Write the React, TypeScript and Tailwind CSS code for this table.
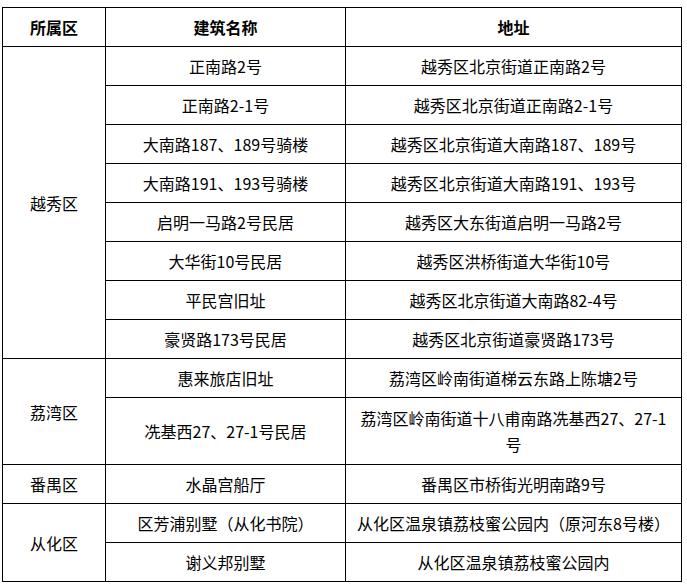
import React from 'react'

type Row = {
  district?: string
  span?: number
  name: React.ReactNode
  address: React.ReactNode
  tall?: boolean
}

const ROWS: Row[] = [
  { district: '越秀区', span: 8, name: '正南路2号', address: '越秀区北京街道正南路2号' },
  { name: '正南路2-1号', address: '越秀区北京街道正南路2-1号' },
  { name: '大南路187、189号骑楼', address: '越秀区北京街道大南路187、189号' },
  { name: '大南路191、193号骑楼', address: '越秀区北京街道大南路191、193号' },
  { name: '启明一马路2号民居', address: '越秀区大东街道启明一马路2号' },
  { name: '大华街10号民居', address: '越秀区洪桥街道大华街10号' },
  { name: '平民宫旧址', address: '越秀区北京街道大南路82-4号' },
  { name: '豪贤路173号民居', address: '越秀区北京街道豪贤路173号' },
  { district: '荔湾区', span: 2, name: '惠来旅店旧址', address: '荔湾区岭南街道梯云东路上陈塘2号' },
  {
    name: '冼基西27、27-1号民居',
    address: (
      <>
        荔湾区岭南街道十八甫南路冼基西27、27-1
        <br />号
      </>
    ),
    tall: true,
  },
  { district: '番禺区', span: 1, name: '水晶宫船厅', address: '番禺区市桥街光明南路9号' },
  { district: '从化区', span: 2, name: '区芳浦别墅（从化书院）', address: '从化区温泉镇荔枝蜜公园内（原河东8号楼）' },
  { name: '谢义邦别墅', address: '从化区温泉镇荔枝蜜公园内' },
]

export default function App() {
  return (
    <div
      className="min-h-screen bg-white pt-[7px] pl-[2px] text-black"
      style={{ fontFamily: '"Noto Sans CJK SC", "Noto Sans", sans-serif' }}
    >
      <table className="w-[679px] table-fixed border-collapse text-[16px] leading-[26px]">
        <colgroup>
          <col className="w-[103px]" />
          <col className="w-[240px]" />
          <col className="w-[336px]" />
        </colgroup>
        <thead>
          <tr className="h-[39px]">
            <th className="border border-black p-0 text-center font-bold">所属区</th>
            <th className="border border-black p-0 text-center font-bold">建筑名称</th>
            <th className="border border-black p-0 text-center font-bold">地址</th>
          </tr>
        </thead>
        <tbody>
          {ROWS.map((row, i) => (
            <tr key={i} className={row.tall ? 'h-[67px]' : 'h-[39px]'}>
              {row.district && (
                <td rowSpan={row.span} className="border border-black p-0 text-center align-middle">
                  {row.district}
                </td>
              )}
              <td className="border border-black p-0 text-center align-middle">{row.name}</td>
              <td className="border border-black px-1 py-0 text-center align-middle">{row.address}</td>
            </tr>
          ))}
        </tbody>
      </table>
    </div>
  )
}
